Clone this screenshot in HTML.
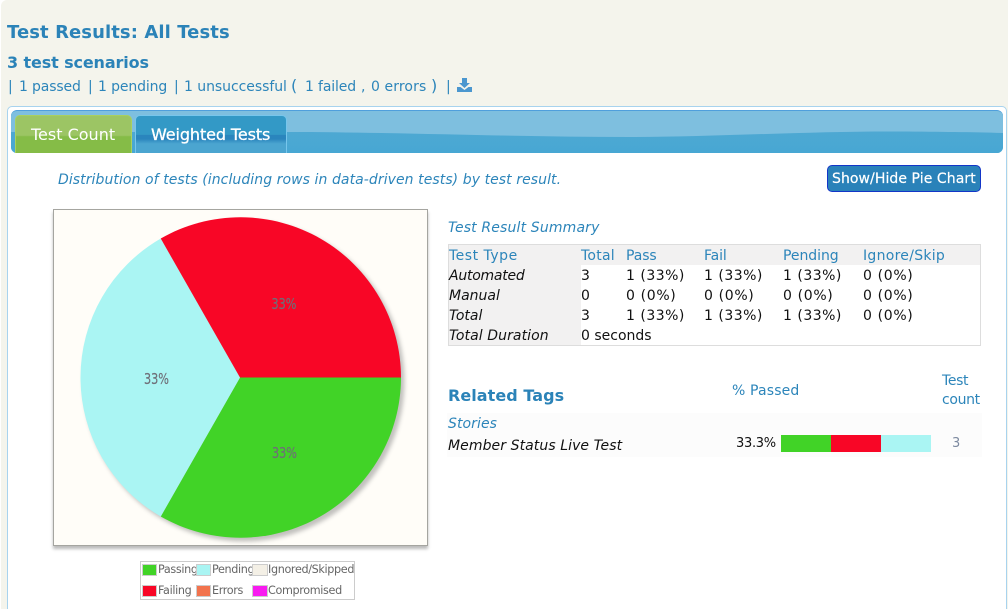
<!DOCTYPE html>
<html><head><meta charset="utf-8">
<style>
html,body{margin:0;padding:0;width:1008px;height:609px;overflow:hidden;background:#fff;}
body{font-family:"DejaVu Sans","Liberation Sans",sans-serif;position:relative;}
.a{position:absolute;white-space:nowrap;line-height:20px;}
.bl{color:#2c85ba;}
.k{color:#111;}
.i{font-style:italic;}
.h{color:#2b83b8;font-weight:bold;}
.t{font-size:14px;letter-spacing:0;}
.n1{letter-spacing:.5px;}
.n0{letter-spacing:.65px;}
.s{position:absolute;width:13px;height:10px;border:1px solid #ccc;}
.l{position:absolute;font-size:11.2px;color:#666;letter-spacing:-.35px;line-height:14px;white-space:nowrap}
</style></head>
<body>
<div style="position:absolute;left:1px;top:0;width:1007px;height:609px;background:#f4f4ec;border-radius:6px 0 0 0;"></div>
<div class="a h" style="left:7px;top:23px;font-size:18px;letter-spacing:.08px;">Test Results: All Tests</div>
<div class="a h" style="left:7px;top:53px;font-size:16px;letter-spacing:-.125px;">3 test scenarios</div>
<div class="a bl t" style="left:8px;top:77px">|</div>
<div class="a bl t" style="left:19px;top:77px;letter-spacing:-.15px">1 passed</div>
<div class="a bl t" style="left:88px;top:77px">|</div>
<div class="a bl t" style="left:98px;top:77px;letter-spacing:-.12px">1 pending</div>
<div class="a bl t" style="left:174px;top:77px">|</div>
<div class="a bl t" style="left:184px;top:77px;letter-spacing:-.05px">1 unsuccessful</div>
<div class="a bl" style="left:291px;top:76px;font-size:16px">(</div>
<div class="a bl t" style="left:305px;top:77px;letter-spacing:-.15px">1 failed</div>
<div class="a bl t" style="left:361px;top:77px">,</div>
<div class="a bl t" style="left:371px;top:77px;letter-spacing:.1px">0 errors</div>
<div class="a bl" style="left:431px;top:76px;font-size:16px">)</div>
<div class="a bl t" style="left:446px;top:77px">|</div>
<svg class="a" style="left:457px;top:77px" width="16" height="16" viewBox="0 0 16 16"><path d="M5 1h5v5h3l-5.500 5L2 6h3z" fill="#4b97cf"/><path d="M0 10h3.500l4 3 4-3H15v5H0z" fill="#4b97cf"/></svg>

<!-- main panel -->
<div style="position:absolute;left:7px;top:106px;width:1000px;height:510px;background:#fff;border:1px solid #a8d3ee;border-radius:5px;box-sizing:border-box;"></div>
<div style="position:absolute;left:11px;top:110px;width:992px;height:43px;border-radius:6px;overflow:hidden;background:#4aa8d3;border-top:1px solid #4f9fdc;box-sizing:border-box;">
<svg width="992" height="43" style="position:absolute;left:0;top:0"><defs><linearGradient id="g" x1="0" y1="0" x2="0" y2="1"><stop offset="0" stop-color="#54a9d2"/><stop offset="1" stop-color="#47a7d3"/></linearGradient></defs><rect width="992" height="43" fill="url(#g)"/><path d="M0 0H992V22C960 21 930 21 889 20.500C800 20 700 26 619 26C500 26 380 21 276 21L0 21Z" fill="#7ebfdf"/></svg>
</div>
<!-- tabs -->
<div style="position:absolute;left:15px;top:115px;width:117px;height:38px;box-sizing:border-box;border:1px solid #a9d05f;border-bottom:0;border-radius:5px 5px 0 0;background:linear-gradient(#9cc564 0,#9cc564 52%,#85bc47 56%,#85bc47 100%);"></div>
<div class="a" style="left:31px;top:125px;color:#fff;font-size:16px;letter-spacing:0;">Test Count</div>
<div style="position:absolute;left:135px;top:115px;width:152px;height:38px;box-sizing:border-box;border:1px solid #77c6ec;border-bottom:0;border-radius:5px 5px 0 0;background:linear-gradient(#3399c6 0,#3399c6 50%,#2a85bd 52%,#2a85bd 62%,#4ba5d0 75%,#4ba5d0 100%);"></div>
<div class="a" style="left:151px;top:125px;color:#fff;font-size:16px;font-weight:500;letter-spacing:-.1px;-webkit-text-stroke:.3px #fff;">Weighted Tests</div>

<div class="a bl i" style="left:58px;top:170px;font-size:14px;letter-spacing:.07px;">Distribution of tests (including rows in data-driven tests) by test result.</div>
<div style="position:absolute;left:827px;top:165px;width:154px;height:27px;box-sizing:border-box;background:#2a82b9;border:1px solid #1336c8;border-radius:5px;"></div>
<div class="a" style="left:832px;top:169px;color:#fff;font-size:14px;letter-spacing:.07px;-webkit-text-stroke:.2px #fff;">Show/Hide Pie Chart</div>

<!-- pie -->
<div style="position:absolute;left:53px;top:209px;width:375px;height:337px;box-sizing:border-box;background:#fffdf8;border:1px solid #a5a5a0;box-shadow:0 3px 3px #bbb;"></div>
<svg style="position:absolute;left:53px;top:209px" width="375" height="337">
<defs><filter id="b" x="-5%" y="-5%" width="110%" height="110%"><feGaussianBlur stdDeviation="2"/></filter></defs>
<circle cx="191" cy="172" r="160.500" fill="#777" opacity=".45" filter="url(#b)"/>
<path d="M187 168.500H348A160.500 160.500 0 0 1 107.750 307.500Z" fill="#41d327"/>
<path d="M187 168.500L107.750 307.500A160.500 160.500 0 0 1 107.750 29.500Z" fill="#aaf5f3"/>
<path d="M187 168.500L107.750 29.500A160.500 160.500 0 0 1 348 168.500Z" fill="#f80626"/>
<g font-family="DejaVu Sans" font-size="15" fill="#6f6f78" stroke="#6f6f78" stroke-width=".2">
<text x="218.500" y="100" lengthAdjust="spacingAndGlyphs" textLength="25">33%</text>
<text x="91" y="175" lengthAdjust="spacingAndGlyphs" textLength="25">33%</text>
<text x="219" y="249" lengthAdjust="spacingAndGlyphs" textLength="25">33%</text>
</g>
</svg>

<!-- legend -->
<div style="position:absolute;left:140px;top:561px;width:215px;height:39px;box-sizing:border-box;border:1px solid #ccc;background:#fff;"></div>
<div class="s" style="left:142px;top:564px;background:#41d327"></div><div class="l" style="left:158px;top:563px">Passing</div>
<div class="s" style="left:196px;top:564px;background:#aaf5f3"></div><div class="l" style="left:212px;top:563px">Pending</div>
<div class="s" style="left:252px;top:564px;width:14px;background:#f4f0e6"></div><div class="l" style="left:268px;top:563px">Ignored/Skipped</div>
<div class="s" style="left:142px;top:585px;background:#f80626"></div><div class="l" style="left:158px;top:584px">Failing</div>
<div class="s" style="left:196px;top:585px;background:#f2734d"></div><div class="l" style="left:212px;top:584px">Errors</div>
<div class="s" style="left:252px;top:585px;width:14px;background:#f81bf0"></div><div class="l" style="left:268px;top:584px">Compromised</div>

<!-- summary -->
<div class="a bl i t" style="left:448px;top:218px;letter-spacing:.15px">Test Result Summary</div>
<div style="position:absolute;left:448px;top:244px;width:533px;height:102px;box-sizing:border-box;border:1px solid #ddd;background:#fff;"></div>
<div style="position:absolute;left:449px;top:245px;width:531px;height:20px;background:#f2f1f1;"></div>
<div style="position:absolute;left:449px;top:265px;width:132px;height:80px;background:#f2f1f1;"></div>
<div class="a bl t" style="left:449px;top:246px;letter-spacing:.5px">Test Type</div>
<div class="a bl t" style="left:581px;top:246px;letter-spacing:.25px">Total</div>
<div class="a bl t" style="left:626px;top:246px;letter-spacing:-.1px">Pass</div>
<div class="a bl t" style="left:704px;top:246px;letter-spacing:-.1px">Fail</div>
<div class="a bl t" style="left:783px;top:246px;letter-spacing:-.05px">Pending</div>
<div class="a bl t" style="left:863px;top:246px;letter-spacing:.28px">Ignore/Skip</div>

<div class="a k i t" style="left:449px;top:266px;letter-spacing:-.25px">Automated</div>
<div class="a k t" style="left:581px;top:266px">3</div>
<div class="a k t n1" style="left:626px;top:266px">1 (33%)</div>
<div class="a k t n1" style="left:704px;top:266px">1 (33%)</div>
<div class="a k t n1" style="left:783px;top:266px">1 (33%)</div>
<div class="a k t n0" style="left:863px;top:266px">0 (0%)</div>

<div class="a k i t" style="left:449px;top:286px">Manual</div>
<div class="a k t" style="left:581px;top:286px">0</div>
<div class="a k t n0" style="left:626px;top:286px">0 (0%)</div>
<div class="a k t n0" style="left:704px;top:286px">0 (0%)</div>
<div class="a k t n0" style="left:783px;top:286px">0 (0%)</div>
<div class="a k t n0" style="left:863px;top:286px">0 (0%)</div>

<div class="a k i t" style="left:449px;top:306px">Total</div>
<div class="a k t" style="left:581px;top:306px">3</div>
<div class="a k t n1" style="left:626px;top:306px">1 (33%)</div>
<div class="a k t n1" style="left:704px;top:306px">1 (33%)</div>
<div class="a k t n1" style="left:783px;top:306px">1 (33%)</div>
<div class="a k t n0" style="left:863px;top:306px">0 (0%)</div>

<div class="a k i t" style="left:449px;top:326px;letter-spacing:.08px">Total Duration</div>
<div class="a k t" style="left:581px;top:326px">0 seconds</div>

<!-- tags -->
<div class="a h" style="left:448px;top:386px;font-size:16px;letter-spacing:.05px;">Related Tags</div>
<div class="a bl t" style="left:732px;top:381px;letter-spacing:.15px">% Passed</div>
<div class="a bl t" style="left:942px;top:371px;letter-spacing:-.35px">Test</div>
<div class="a bl t" style="left:942px;top:390px;letter-spacing:-.35px">count</div>
<div style="position:absolute;left:447px;top:413px;width:535px;height:44px;background:#fcfcfc;"></div>
<div class="a bl i t" style="left:448px;top:414px;letter-spacing:.08px">Stories</div>
<div class="a k i t" style="left:448px;top:436px;letter-spacing:.08px">Member Status Live Test</div>
<div class="a k" style="left:736px;top:434px;font-size:13px;letter-spacing:-.3px;">33.3%</div>
<div style="position:absolute;left:781px;top:435px;width:50px;height:17px;background:#41d327"></div>
<div style="position:absolute;left:831px;top:435px;width:50px;height:17px;background:#f80626"></div>
<div style="position:absolute;left:881px;top:435px;width:50px;height:17px;background:#aaf5f3"></div>
<div class="a" style="left:952px;top:434px;font-size:13px;color:#7d8aa0;">3</div>
</body></html>
